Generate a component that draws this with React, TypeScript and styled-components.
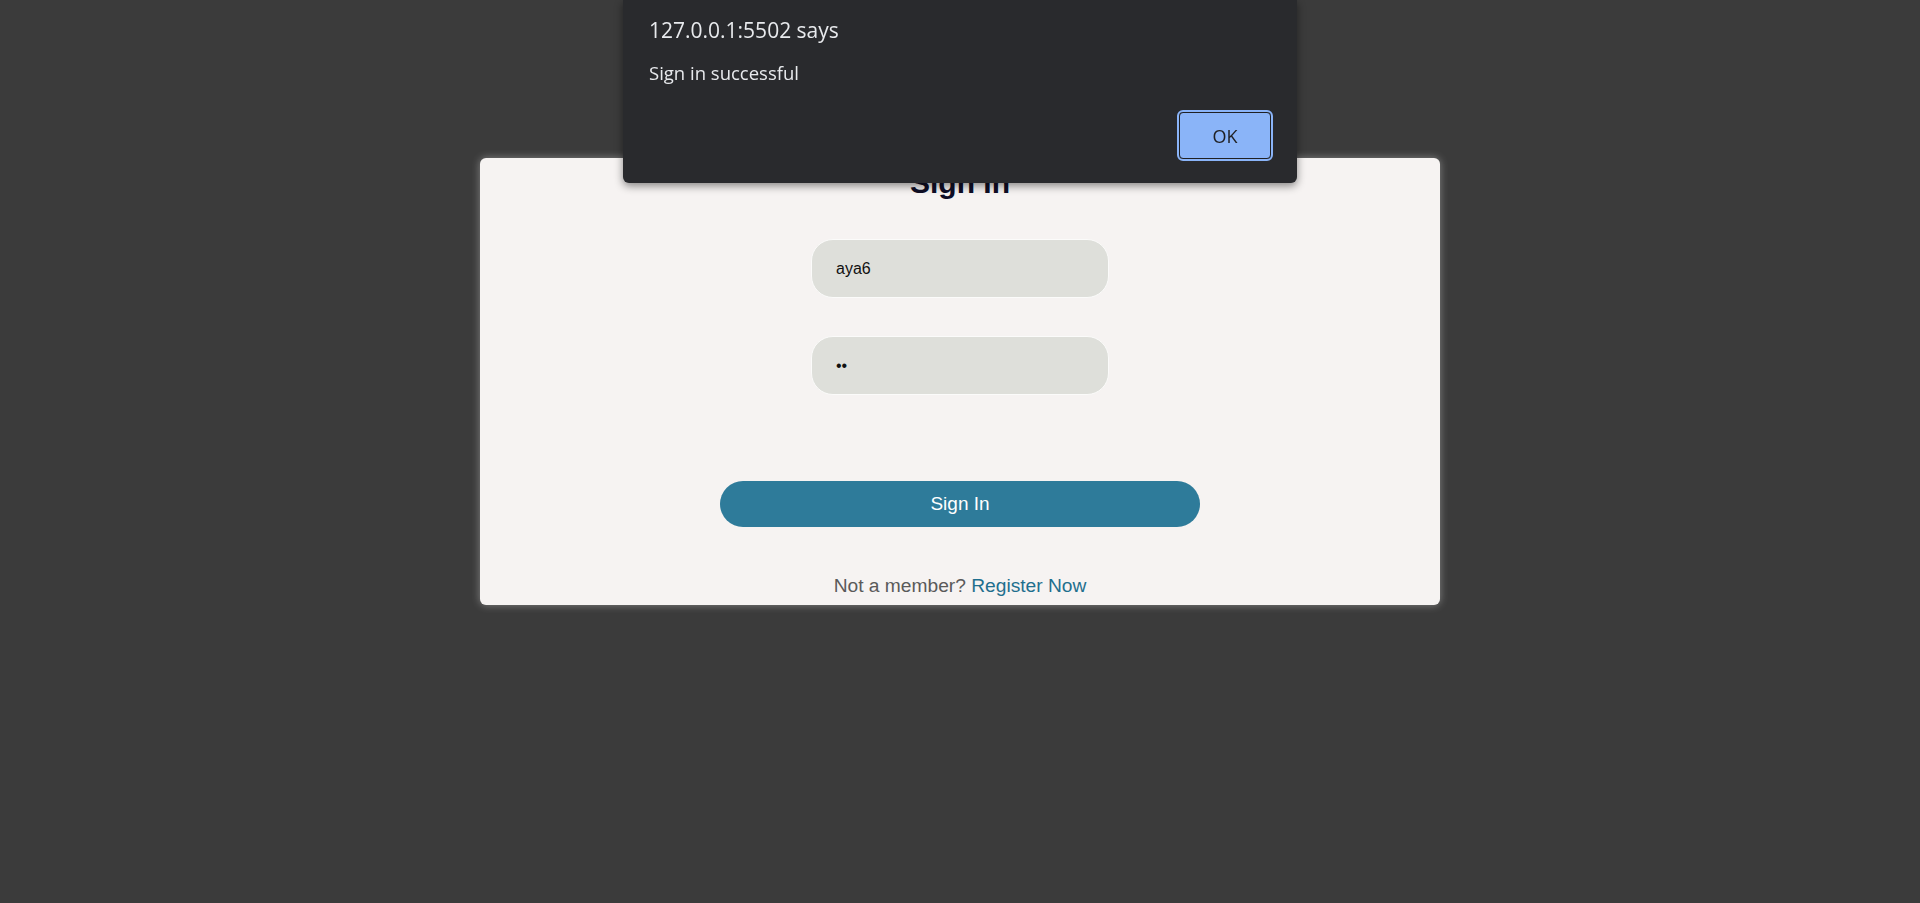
import React from "react";
import styled, { createGlobalStyle } from "styled-components";

const GlobalStyle = createGlobalStyle`
  html, body {
    margin: 0;
    padding: 0;
    background: #3b3b3b;
    font-family: "Liberation Sans", Arial, sans-serif;
  }
  * { box-sizing: border-box; }
`;

const Page = styled.div`
  min-height: 903px;
  padding-top: 158px;
  background: #3b3b3b;
`;

const Card = styled.form`
  width: 960px;
  margin: 0 auto;
  background: #f6f3f2;
  border-radius: 6px;
  box-shadow: 0 0 9px rgba(255, 255, 255, 0.38);
  padding: 8px 0 8px;
  display: flex;
  flex-direction: column;
  align-items: center;
`;

const Title = styled.h2`
  margin: 0;
  font-family: "Liberation Sans", Arial, sans-serif;
  font-size: 30px;
  font-weight: 700;
  line-height: 34px;
  color: #0f0e26;
`;

const Field = styled.input<{ $top: number }>`
  margin-top: ${(p) => p.$top}px;
  width: 298px;
  height: 59px;
  border: 1px solid #fbfbfa;
  border-radius: 22px;
  background: #dedfda;
  padding: 0 24px;
  font-family: "Liberation Sans", Arial, sans-serif;
  font-size: 16px;
  color: #111;
  outline: none;
`;

const SubmitButton = styled.button`
  margin-top: 86px;
  width: 480px;
  height: 46px;
  border: none;
  border-radius: 23px;
  background: #2e7b9a;
  color: #ffffff;
  font-family: "Liberation Sans", Arial, sans-serif;
  font-size: 19px;
  cursor: pointer;
`;

const Footer = styled.p`
  margin: 48px 0 0;
  font-family: "Liberation Sans", Arial, sans-serif;
  font-size: 19.2px;
  line-height: 22px;
  color: #5a5a5a;
`;

const RegisterLink = styled.a`
  color: #1f6f8e;
  text-decoration: none;
`;

const Dialog = styled.div`
  position: fixed;
  top: 0;
  left: 623px;
  width: 674px;
  height: 183px;
  background: #292a2d;
  border-radius: 0 0 6px 6px;
  box-shadow: 0 3px 8px rgba(0, 0, 0, 0.45);
  padding: 17px 26px 24px 26px;
  display: flex;
  flex-direction: column;
  font-family: "Open Sans", "Noto Sans", sans-serif;
  color: #e8eaed;
`;

const DialogTitle = styled.div`
  font-size: 21px;
  line-height: 26px;
`;

const DialogMessage = styled.div`
  margin-top: 18px;
  font-size: 18.5px;
  line-height: 24px;
`;

const DialogActions = styled.div`
  margin-top: auto;
  display: flex;
  justify-content: flex-end;
`;

const OkButton = styled.button`
  width: 92px;
  height: 47px;
  border: 1px solid #1f2023;
  border-radius: 4px;
  background: #8ab4f8;
  outline: 2px solid #8ab4f8;
  outline-offset: 0;
  color: #202124;
  font-family: "Open Sans", "Noto Sans", sans-serif;
  font-size: 18px;
  cursor: pointer;
`;

export default function App() {
  return (
    <>
      <GlobalStyle />
      <Page>
        <Card onSubmit={(e) => e.preventDefault()}>
          <Title>Sign In</Title>
          <Field $top={39} type="text" defaultValue="aya6" />
          <Field $top={38} type="password" defaultValue="ab" />
          <SubmitButton type="submit">Sign In</SubmitButton>
          <Footer>
            Not a member? <RegisterLink href="#">Register Now</RegisterLink>
          </Footer>
        </Card>
      </Page>
      <Dialog role="alertdialog">
        <DialogTitle>127.0.0.1:5502 says</DialogTitle>
        <DialogMessage>Sign in successful</DialogMessage>
        <DialogActions>
          <OkButton type="button">OK</OkButton>
        </DialogActions>
      </Dialog>
    </>
  );
}
